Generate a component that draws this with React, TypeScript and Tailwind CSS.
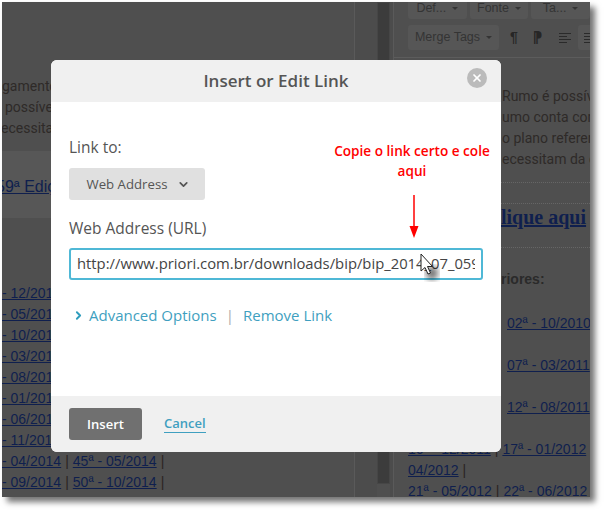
import { ChevronDown, ChevronRight, X } from 'lucide-react';

const leftLinks = [
  ['- 12/2014'],
  ['- 05/2013'],
  ['- 10/2013'],
  ['- 03/2013'],
  ['- 08/2013'],
  ['- 01/2014'],
  ['- 06/2013'],
  ['- 11/2013'],
  ['- 04/2014', '45ª - 05/2014'],
  ['- 09/2014', '50ª - 10/2014'],
];

function ToolButton({ label, caret, className }: { label: string; caret?: boolean; className: string }) {
  return (
    <div className={`flex items-center gap-[6px] rounded-[3px] bg-[#565656] text-[#343434] ${className}`}>
      <span>{label}</span>
      {caret && <span className="h-0 w-0 border-x-[3px] border-t-[3px] border-x-transparent border-t-[#343434]" />}
    </div>
  );
}

function Background() {
  return (
    <div className="flex h-[495px] w-[588px] overflow-hidden bg-[#4f4f4f] font-['Liberation_Sans',sans-serif]">
      <div className="w-[353px] shrink-0 border-r border-[#5a5a5a]">
        <div className="pt-[74px] font-['Roboto',sans-serif] text-[14px] leading-[21px] text-[#2e2a28]">
          <div className="whitespace-nowrap">gamento</div>
          <div className="whitespace-nowrap pl-[3px]">possível</div>
          <div className="-ml-[1px] whitespace-nowrap">ecessita</div>
        </div>
        <div className="mt-[12px] flex h-[67px] items-center bg-[#575757] pt-[4px] text-[16px] text-[#0f1f4e]">
          <span className="-ml-[6px] underline">59ª Edição</span>
        </div>
        <div className="pt-[65px] text-[14px] leading-[21px] text-[#2b2422]">
          {leftLinks.map((row) => (
            <div key={row[0]} className="flex h-[21px] gap-[4px] whitespace-nowrap">
              <span className="text-[#0f1f4e] underline">{row[0]}</span>
              {row[1] && (
                <>
                  <span>|</span>
                  <span className="text-[#0f1f4e] underline">{row[1]}</span>
                  <span>|</span>
                </>
              )}
            </div>
          ))}
        </div>
      </div>
      <div className="w-[22px] shrink-0 bg-[#4c4c4c]" />
      <div className="h-[482px] w-[13px] shrink-0 border border-[#464646] bg-[#3c3c3c]" />
      <div className="w-[3px] shrink-0 bg-[#4c4c4c]" />
      <div className="min-w-0 flex-1 overflow-hidden border-l border-[#5a5a5a]">
        <div className="border-b border-[#5c5c5c] pl-[14px]">
          <div className="flex h-[17px] items-end gap-[3px] whitespace-nowrap text-[12.5px]">
            <ToolButton label="Def..." caret className="h-[22px] w-[64px] justify-center" />
            <ToolButton label="Fonte" caret className="h-[22px] w-[64px] justify-center" />
            <ToolButton label="Ta..." caret className="h-[22px] w-[64px] justify-center" />
          </div>
          <div className="mt-[6px] flex h-[32px] items-start whitespace-nowrap text-[12.5px]">
            <ToolButton label="Merge Tags" caret className="h-[25px] w-[91px] shrink-0 justify-center gap-[3px]" />
            <span className="ml-[11px] text-[14px] font-bold leading-[25px] text-[#262626]">¶</span>
            <span className="ml-[15px] text-[14px] font-bold leading-[25px] text-[#262626]">⁋</span>
            <div className="ml-[17px] mt-[8px] flex w-[12px] shrink-0 flex-col gap-[2px]">
              <span className="h-px w-[12px] bg-[#2a2a2a]" />
              <span className="h-px w-[8px] bg-[#2a2a2a]" />
              <span className="h-px w-[12px] bg-[#2a2a2a]" />
              <span className="h-px w-[8px] bg-[#2a2a2a]" />
            </div>
            <div className="ml-[7px] flex h-[25px] w-[28px] shrink-0 flex-col items-start justify-center gap-[2px] rounded-[3px] bg-[#565656] pl-[6px]">
              <span className="h-px w-[12px] bg-[#2a2a2a]" />
              <span className="h-px w-[8px] bg-[#2a2a2a]" />
              <span className="h-px w-[12px] bg-[#2a2a2a]" />
              <span className="h-px w-[8px] bg-[#2a2a2a]" />
            </div>
          </div>
        </div>
        <div className="h-[2px] overflow-hidden pl-[14px] text-[15px] leading-[15px] text-[#2a2a2a]">nosso conta :</div>
        <div className="whitespace-nowrap pl-[108px] pt-[26px] font-['Roboto',sans-serif] text-[14px] leading-[21px] text-[#2e2a28]">
          <div>Rumo é possível</div>
          <div>umo conta com</div>
          <div>o plano referente</div>
          <div>ecessitam da c</div>
        </div>
        <div className="mt-[12px] h-[21px] border-t border-dotted border-[#666]" />
        <div className="h-[44px] border-t border-dotted border-[#666] pl-[107px] pt-[1px] font-['Liberation_Serif',serif] text-[20px] font-bold leading-[24px] text-[#0f1f4e]">
          <span className="underline">lique aqui</span>
        </div>
        <div className="h-[22px] border-t border-dotted border-[#666]" />
        <div className="whitespace-nowrap pl-[107px] text-[14px] font-bold leading-[20px] text-[#2a2a2a]">riores:</div>
        <div className="whitespace-nowrap text-[14px] leading-[21px] text-[#0f1f4e]">
          <div className="mt-[24px] pl-[113px]"><span className="underline">02ª - 10/2010</span></div>
          <div className="mt-[21px] pl-[113px]"><span className="underline">07ª - 03/2011</span></div>
          <div className="mt-[21px] pl-[113px]"><span className="underline">12ª - 08/2011</span></div>
          <div className="mt-[21px] flex gap-[4px] pl-[14px]">
            <span className="underline">16ª - 12/2011</span>
            <span className="text-[#2b2422]">|</span>
            <span className="underline">17ª - 01/2012</span>
          </div>
          <div className="flex gap-[4px] pl-[14px]">
            <span className="underline">04/2012</span>
            <span className="text-[#2b2422]">|</span>
          </div>
          <div className="flex gap-[4px] pl-[14px]">
            <span>21ª - 05/2012</span>
            <span className="text-[#2b2422]">|</span>
            <span>22ª - 06/2012</span>
          </div>
        </div>
      </div>
    </div>
  );
}

function LinkDialog() {
  return (
    <div className="absolute left-[49px] top-[58px] flex h-[392px] w-[450px] flex-col overflow-hidden rounded-[6px] bg-white font-['Open_Sans',sans-serif] text-[#555]">
      <div className="relative flex h-[42px] shrink-0 items-center justify-center bg-[#f0f0f0] text-[17px] font-semibold">
        Insert or Edit Link
        <div className="absolute right-[14px] top-[8px] flex h-[20px] w-[20px] items-center justify-center rounded-full bg-[#bbb]">
          <X size={12} strokeWidth={3.5} className="text-white" />
        </div>
      </div>
      <div className="flex-1 px-[18px] pt-[35px]">
        <div className="text-[15.5px] font-medium leading-[20px]">Link to:</div>
        <div className="mt-[11px] flex h-[32px] w-[136px] items-center justify-center gap-[10px] rounded-[3px] bg-[#e0e0e0] pl-[3px] pt-[1px] text-[13.2px] font-medium">
          Web Address
          <ChevronDown size={13} strokeWidth={3.2} />
        </div>
        <div className="mt-[18px] text-[15.5px] font-medium leading-[20px]">Web Address (URL)</div>
        <div className="mt-[10px] h-[32px] w-[414px] overflow-hidden whitespace-nowrap rounded-[3px] border-2 border-[#4fb8d6] px-[6px] text-[14.8px] leading-[27px] text-[#444]">
          <div className="overflow-hidden">http://www.priori.com.br/downloads/bip/bip_2014_07_059.pdf</div>
        </div>
        <div className="mt-[25px] flex items-center text-[15px] leading-[20px] text-[#3f9fc0]">
          <ChevronRight size={13} strokeWidth={3.5} className="ml-[3px] text-[#2f9dbd]" />
          <span className="ml-[4px]">Advanced Options</span>
          <span className="ml-[9px] text-[#aaa]">|</span>
          <span className="ml-[9px]">Remove Link</span>
        </div>
      </div>
      <div className="flex h-[56px] shrink-0 items-center gap-[22px] bg-[#f0f0f0] px-[18px]">
        <div className="flex h-[32px] w-[73px] items-center justify-center rounded-[3px] bg-[#707070] pt-[1px] text-[13px] font-semibold text-white">Insert</div>
        <span className="border-b border-[#3f9fc0] text-[13px] font-semibold leading-[17px] text-[#3f9fc0]">Cancel</span>
      </div>
    </div>
  );
}

export default function App() {
  return (
    <div className="h-[510px] w-[604px] overflow-hidden bg-white pl-[2px] pt-[2px]">
      <div className="relative h-[495px] w-[588px] shadow-[5px_5px_6px_rgba(0,0,0,0.55)]">
        <Background />
        <LinkDialog />
        <div className="absolute left-[325px] top-[139px] w-[170px] text-center font-['Open_Sans',sans-serif] text-[13.6px] font-semibold leading-[20px] text-[#f00]">
          Copie o link certo e cole aqui
        </div>
        <svg className="absolute left-[406px] top-[193px]" width="12" height="44" viewBox="0 0 12 44">
          <path d="M6 0V34" stroke="#f00" strokeWidth="1.5" />
          <path d="M1.5 31H10.5L6 43Z" fill="#f00" />
        </svg>
        <svg className="absolute left-[416px] top-[250px]" width="24" height="32" viewBox="0 0 24 32">
          <defs>
            <filter id="cursor-blur"><feGaussianBlur stdDeviation="3" /></filter>
          </defs>
          <ellipse cx="14" cy="21" rx="6" ry="7" fill="#000" opacity="0.55" filter="url(#cursor-blur)" />
          <path d="M3 2V19L7 15.5L10 22L12.5 21L9.5 14.5H14.5Z" fill="#fff" stroke="#222" strokeWidth="1" />
        </svg>
      </div>
    </div>
  );
}
